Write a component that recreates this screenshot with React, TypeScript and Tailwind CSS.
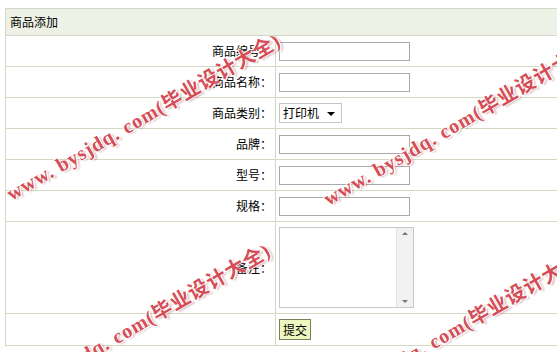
import React from 'react';

const rows = [
  { label: '商品编号：', kind: 'input' },
  { label: '商品名称：', kind: 'input' },
  { label: '商品类别：', kind: 'select' },
  { label: '品牌：', kind: 'input' },
  { label: '型号：', kind: 'input' },
  { label: '规格：', kind: 'input' },
];

function Field({ kind }: { kind: string }) {
  if (kind === 'select') {
    return (
      <div className="relative w-[63px] h-[20px] border border-[#c5c5c5] bg-white">
        <select className="appearance-none w-full h-full bg-transparent pl-[3px] text-[12px] text-black outline-none">
          <option>打印机</option>
        </select>
        <span className="absolute right-[6px] top-[8px] w-0 h-0 border-l-[4px] border-r-[4px] border-t-[4px] border-l-transparent border-r-transparent border-t-black pointer-events-none" />
      </div>
    );
  }
  return <input type="text" className="block w-[131px] h-[19px] border border-[#a9a9a9] bg-white outline-none" />;
}

function Mark({ className }: { className: string }) {
  return (
    <span
      className={`absolute whitespace-nowrap origin-left -translate-y-1/2 -rotate-[30deg] text-[20px] font-bold tracking-[1px] text-[#cf3442]/90 [text-shadow:1px_1px_0_#fff,-1px_-1px_0_#fff,2px_2px_2px_rgba(110,0,0,0.3)] ${className}`}
      style={{ fontFamily: '"Liberation Serif", "Noto Sans CJK SC", serif' }}
    >
      www. bysjdq. com(毕业设计大全)
    </span>
  );
}

export default function App() {
  return (
    <div
      className="relative w-[557px] h-[352px] overflow-hidden bg-white text-[12px] text-black"
      style={{ fontFamily: '"Noto Sans CJK SC", "Noto Sans", sans-serif' }}
    >
      <div className="pt-[8px] pl-[5px]">
        <table className="w-[570px] border-collapse table-fixed">
          <colgroup>
            <col className="w-[270px]" />
            <col />
          </colgroup>
          <tbody>
            <tr className="h-[27px]">
              <td colSpan={2} className="border border-[#d2d8c2] bg-[#eef2e6] pl-[4px] align-middle">
                商品添加
              </td>
            </tr>
            {rows.map((r) => (
              <tr key={r.label} className="h-[31px]">
                <td className="border border-[#d2d8c2] text-right pr-[3px] align-middle">{r.label}</td>
                <td className="border border-[#d2d8c2] pl-[3px] align-middle">
                  <Field kind={r.kind} />
                </td>
              </tr>
            ))}
            <tr className="h-[92px]">
              <td className="border border-[#d2d8c2] text-right pr-[3px] align-middle">备注：</td>
              <td className="border border-[#d2d8c2] pl-[3px] align-middle">
                <div className="flex w-[135px] h-[81px] border border-[#c8c8c8] bg-white">
                  <textarea className="flex-1 resize-none outline-none bg-white" />
                  <div className="w-[17px] flex flex-col justify-between bg-[#f1f1f1] border-l border-[#e2e2e2] py-[4px] items-center">
                    <span className="w-0 h-0 border-l-[3px] border-r-[3px] border-b-[3px] border-l-transparent border-r-transparent border-b-[#777]" />
                    <span className="w-0 h-0 border-l-[3px] border-r-[3px] border-t-[3px] border-l-transparent border-r-transparent border-t-[#777]" />
                  </div>
                </div>
              </td>
            </tr>
            <tr className="h-[32px]">
              <td className="border border-[#d2d8c2]" />
              <td className="border border-[#d2d8c2] pl-[3px] align-middle">
                <button className="h-[21px] px-[3px] border border-[#7c7c60] bg-[#eef7bf] text-[12px] leading-none">
                  提交
                </button>
              </td>
            </tr>
          </tbody>
        </table>
      </div>

      <div className="absolute inset-0 pointer-events-none">
        <Mark className="left-[8px] top-[195px]" />
        <Mark className="left-[325px] top-[200px]" />
        <Mark className="left-[-2px] top-[405px]" />
        <Mark className="left-[315px] top-[410px]" />
      </div>
    </div>
  );
}
